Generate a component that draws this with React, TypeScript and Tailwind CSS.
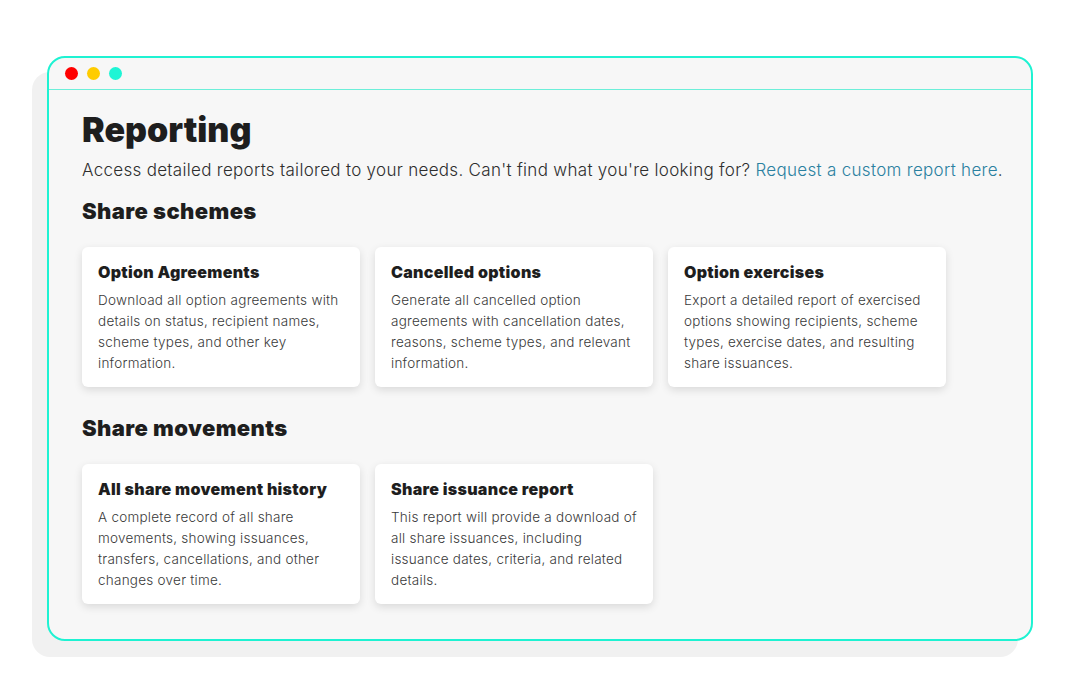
import React, { FC } from 'react';

interface IReport {
  title: string;
  desc: string;
}

const shareSchemes: IReport[] = [
  {
    title: 'Option Agreements',
    desc: 'Download all option agreements with details on status, recipient names, scheme types, and other key information.',
  },
  {
    title: 'Cancelled options',
    desc: 'Generate all cancelled option agreements with cancellation dates, reasons, scheme types, and relevant information.',
  },
  {
    title: 'Option exercises',
    desc: 'Export a detailed report of exercised options showing recipients, scheme types, exercise dates, and resulting share issuances.',
  },
];

const shareMovements: IReport[] = [
  {
    title: 'All share movement history',
    desc: 'A complete record of all share movements, showing issuances, transfers, cancellations, and other changes over time.',
  },
  {
    title: 'Share issuance report',
    desc: 'This report will provide a download of all share issuances, including issuance dates, criteria, and related details.',
  },
];

const font = { fontFamily: 'Inter, "Open Sans", "Liberation Sans", sans-serif' };

const ReportCard: FC<{ report: IReport }> = ({ report }) => (
  <div className="w-[278px] h-[140px] bg-white rounded-md pl-4 pr-3 pt-[15px] shadow-[0_3px_8px_rgba(0,0,0,0.12)]">
    <div className="text-[16px] font-black text-[#1e1e1e] leading-5 tracking-[0.3px]">{report.title}</div>
    <p className="mt-[8px] text-[13.5px] leading-[21px] text-[#3a3a3a] font-light tracking-[0.25px]">{report.desc}</p>
  </div>
);

const Section: FC<{ title: string; reports: IReport[] }> = ({ title, reports }) => (
  <div>
    <h2 className="text-[22px] font-black text-[#1e1e1e] leading-7 tracking-[0.4px]">{title}</h2>
    <div className="flex gap-[15px] mt-[22px]">
      {reports.map(item => (
        <ReportCard key={item.title} report={item} />
      ))}
    </div>
  </div>
);

export default function App() {
  return (
    <div className="w-[1080px] h-[697px] bg-white pt-[56px] pl-[47px]" style={font}>
      <div className="w-[986px] h-[585px] rounded-[18px] border-2 border-[#1ef2d2] bg-[#f7f7f7] shadow-[-15px_16px_0_#f1f1f1] overflow-hidden">
        {/* window chrome */}
        <div className="flex items-center gap-[9px] h-[32px] pl-[16px] border-b border-[#6cefd9]">
          <span className="w-[13px] h-[13px] rounded-full bg-[#ff0000]" />
          <span className="w-[13px] h-[13px] rounded-full bg-[#ffcc00]" />
          <span className="w-[13px] h-[13px] rounded-full bg-[#1ef5d5]" />
        </div>
        <div className="pl-[33px] pt-[18px]">
          <h1 className="text-[34px] font-black text-[#1e1e1e] leading-[44px]">Reporting</h1>
          <p className="mt-[6px] text-[17px] text-[#2e2e2e] font-light leading-6 tracking-[0.3px]">
            Access detailed reports tailored to your needs. Can't find what you're looking for?{' '}
            <span className="text-[#2a80a0]">Request a custom report here</span>.
          </p>
          <div className="mt-[15px]">
            <Section title="Share schemes" reports={shareSchemes} />
          </div>
          <div className="mt-[27px]">
            <Section title="Share movements" reports={shareMovements} />
          </div>
        </div>
      </div>
    </div>
  );
}
